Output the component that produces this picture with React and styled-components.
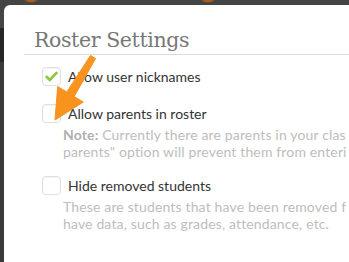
import React from "react";
import styled, { createGlobalStyle } from "styled-components";

const Global = createGlobalStyle`
  html, body { margin: 0; padding: 0; }
  body {
    width: 349px;
    height: 262px;
    overflow: hidden;
    background:
      radial-gradient(ellipse 7px 3px at 31px 0px, #b8651c 0%, #9a5a22 60%, rgba(0,0,0,0) 100%),
      radial-gradient(ellipse 7px 3px at 208px 0px, #b8651c 0%, #9a5a22 60%, rgba(0,0,0,0) 100%),
      linear-gradient(to bottom, #444 0px, #444 28px, #262626 28px, #262626 62px, #3a3a3a 62px);
    font-family: Lato, "Open Sans", sans-serif;
  }
`;

const Stage = styled.div`
  position: relative;
  width: 349px;
  height: 262px;
  overflow: hidden;
  padding: 5px 0 0 4px;
  box-sizing: border-box;
`;

const Modal = styled.div`
  width: 345px;
  height: 257px;
  overflow: hidden;
  background: #fff;
  border-top-left-radius: 6px;
  padding: 0 0 0 20px;
  box-sizing: border-box;
`;

const Header = styled.div`
  border-bottom: 1px solid #dcdcdc;
  padding: 22px 0 0 10px;
  height: 50px;
  box-sizing: border-box;
`;

const Title = styled.h2`
  margin: 0;
  font-family: "DejaVu Serif", serif;
  font-weight: 300;
  font-size: 20.5px;
  line-height: 27px;
  color: #777;
  letter-spacing: -0.4px;
  white-space: nowrap;
`;

const Options = styled.div`
  display: flex;
  flex-direction: column;
  gap: 14px;
  padding: 10px 0 0 18px;
`;

const Option = styled.div`
  display: flex;
  flex-direction: column;
`;

const Row = styled.label`
  display: flex;
  align-items: center;
  gap: 7px;
  height: 23px;
`;

const Box = styled.span`
  width: 19px;
  height: 19px;
  box-sizing: border-box;
  border: 1px solid #dedede;
  border-radius: 4px;
  background: #fff;
  box-shadow: inset 0 1px 1px rgba(0,0,0,0.04);
  display: flex;
  align-items: center;
  justify-content: center;
  flex: none;
`;

const Label = styled.span`
  font-size: 14px;
  color: #333;
  white-space: nowrap;
`;

const Help = styled.p`
  margin: 1px 0 0 21px;
  font-size: 14px;
  letter-spacing: 0.15px;
  line-height: 17px;
  color: #bdbdbd;
  white-space: nowrap;
  b { color: #b0b0b0; font-weight: 700; }
`;

const Arrow = styled.svg`
  position: absolute;
  left: 0;
  top: 0;
  pointer-events: none;
`;

function Check() {
  return (
    <svg width="13" height="11" viewBox="0 0 13 11">
      <path d="M1.5 5.8 L4.8 9 L11.5 1.8" fill="none" stroke="#8dc63f" strokeWidth="2.6" strokeLinecap="round" strokeLinejoin="round" />
    </svg>
  );
}

export default function App() {
  return (
    <>
      <Global />
      <Stage>
        <Modal>
          <Header>
            <Title>Roster Settings</Title>
          </Header>
          <Options>
            <Option>
              <Row>
                <Box><Check /></Box>
                <Label>Allow user nicknames</Label>
              </Row>
            </Option>
            <Option>
              <Row>
                <Box />
                <Label>Allow parents in roster</Label>
              </Row>
              <Help>
                <b>Note:</b> Currently there are parents in your clas
                <br />
                parents" option will prevent them from enteri
              </Help>
            </Option>
            <Option>
              <Row>
                <Box />
                <Label>Hide removed students</Label>
              </Row>
              <Help>
                These are students that have been removed f
                <br />
                have data, such as grades, attendance, etc.
              </Help>
            </Option>
          </Options>
        </Modal>
        <Arrow width="349" height="262" viewBox="0 0 349 262">
          <polygon
            points="95.5,58.6 90.5,55.4 66.8,92 57.7,86.6 55,120 83.3,102 74.2,96.6"
            fill="#f7931e"
            strokeLinejoin="round"
            stroke="#f7931e"
            strokeWidth="1"
          />
        </Arrow>
      </Stage>
    </>
  );
}
